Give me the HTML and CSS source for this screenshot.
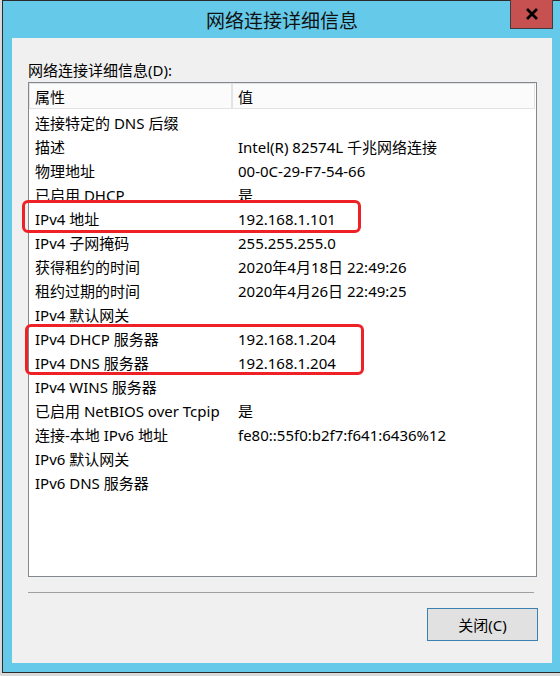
FILE: index.html
```html
<!DOCTYPE html>
<html lang="zh-CN">
<head>
<meta charset="utf-8">
<title>网络连接详细信息</title>
<link rel="stylesheet" href="styles.css">
</head>
<body>
<div class="screen">
  <div class="window">
    <div class="titlebar">
      <span class="title">网络连接详细信息</span>
      <button class="close" aria-label="关闭">
        <svg width="14" height="12" viewBox="0 0 14 12"><path d="M2 1 L12 11 M12 1 L2 11" stroke="#000" stroke-width="2.8" fill="none"/></svg>
      </button>
    </div>
    <div class="dialog">
      <div class="label">网络连接详细信息(D):</div>
      <div class="listbox">
        <div class="head">
          <div class="hcell hcell-prop">属性</div>
          <div class="hcell hcell-val">值</div>
        </div>
        <div class="rows">
          <div class="row"><span>连接特定的 DNS 后缀</span><span></span></div>
          <div class="row"><span>描述</span><span>Intel(R) 82574L 千兆网络连接</span></div>
          <div class="row"><span>物理地址</span><span>00-0C-29-F7-54-66</span></div>
          <div class="row"><span>已启用 DHCP</span><span>是</span></div>
          <div class="row"><span>IPv4 地址</span><span>192.168.1.101</span></div>
          <div class="row"><span>IPv4 子网掩码</span><span>255.255.255.0</span></div>
          <div class="row"><span>获得租约的时间</span><span>2020年4月18日 22:49:26</span></div>
          <div class="row"><span>租约过期的时间</span><span>2020年4月26日 22:49:25</span></div>
          <div class="row"><span>IPv4 默认网关</span><span></span></div>
          <div class="row"><span>IPv4 DHCP 服务器</span><span>192.168.1.204</span></div>
          <div class="row"><span>IPv4 DNS 服务器</span><span>192.168.1.204</span></div>
          <div class="row"><span>IPv4 WINS 服务器</span><span></span></div>
          <div class="row"><span>已启用 NetBIOS over Tcpip</span><span>是</span></div>
          <div class="row"><span>连接-本地 IPv6 地址</span><span>fe80::55f0:b2f7:f641:6436%12</span></div>
          <div class="row"><span>IPv6 默认网关</span><span></span></div>
          <div class="row"><span>IPv6 DNS 服务器</span><span></span></div>
        </div>
      </div>
      <div class="sep"></div>
      <div class="actions"><button class="btn">关闭(C)</button></div>
    </div>
  </div>
  <div class="mark mark-a"></div>
  <div class="mark mark-b"></div>
</div>
</body>
</html>
```

FILE: styles.css
```css
html, body {
  margin: 0;
  padding: 0;
}
body {
  font-family: "Noto Sans", "Noto Sans CJK SC", sans-serif;
  color: #000;
  width: 560px;
  height: 676px;
  overflow: hidden;
  background: #d8d8d8;
}
.screen {
  position: relative;
  width: 560px;
  height: 676px;
  background: #d9d9d9;
  overflow: hidden;
}
.window {
  position: relative;
  margin-left: 2px;
  width: 558px;
  box-sizing: border-box;
  border-left: 1px solid #2b2b2b;
  border-top: 1px solid #2b2b2b;
  border-bottom: 1px solid #2b2b2b;
  background: #65c9e9;
  padding: 0 8px 9px 9px;
}
.titlebar {
  height: 37px;
  display: flex;
  align-items: center;
  justify-content: center;
}
.title {
  font-family: "Noto Sans CJK SC", sans-serif;
  font-size: 19px;
  line-height: 1;
  color: #111;
}
.close {
  position: absolute;
  top: -1px;
  right: 7px;
  width: 43px;
  height: 29px;
  box-sizing: border-box;
  margin: 0;
  padding: 0;
  border: 1px solid #3d3d3d;
  border-top: none;
  background: #c75050;
  display: flex;
  align-items: center;
  justify-content: center;
}
.dialog {
  background: #f0f0f0;
  height: 625px;
  box-sizing: border-box;
  padding: 22px 15px 0 16px;
}
.label {
  font-size: 15px;
  line-height: 20px;
  height: 20px;
  margin-bottom: 2px;
}
.listbox {
  height: 495px;
  box-sizing: border-box;
  border: 1px solid #828790;
  background: #fff;
}
.head {
  display: flex;
  height: 26px;
}
.hcell {
  box-sizing: border-box;
  height: 26px;
  border: 1px solid #e3e3e3;
  background: #fbfbfb;
  font-size: 15px;
  line-height: 22px;
  padding: 2px 0 0 5px;
}
.hcell-prop {
  width: 203px;
}
.hcell-val {
  width: 303px;
}
.rows {
  padding-top: 2px;
}
.row {
  display: grid;
  grid-template-columns: 203px 1fr;
  height: 24px;
  line-height: 24px;
  font-size: 15px;
  white-space: nowrap;
}
.row span {
  padding-left: 6px;
}
.sep {
  width: 506px;
  height: 1px;
  background: #a0a0a0;
  margin-top: 15px;
}
.actions {
  display: flex;
  justify-content: flex-end;
  margin-top: 15px;
  margin-right: -1px;
}
.btn {
  width: 111px;
  height: 33px;
  box-sizing: border-box;
  margin: 0;
  padding: 0;
  border: 1px solid #3c7fb1;
  background: #e1e1e1;
  font-family: "Noto Sans", "Noto Sans CJK SC", sans-serif;
  font-size: 15px;
  color: #000;
}
.mark {
  position: absolute;
  box-sizing: border-box;
  border: 3px solid #ee2127;
  border-radius: 6px;
}
.mark-a {
  left: 22px;
  top: 200px;
  width: 339px;
  height: 33px;
}
.mark-b {
  left: 25px;
  top: 324px;
  width: 339px;
  height: 51px;
}
```
